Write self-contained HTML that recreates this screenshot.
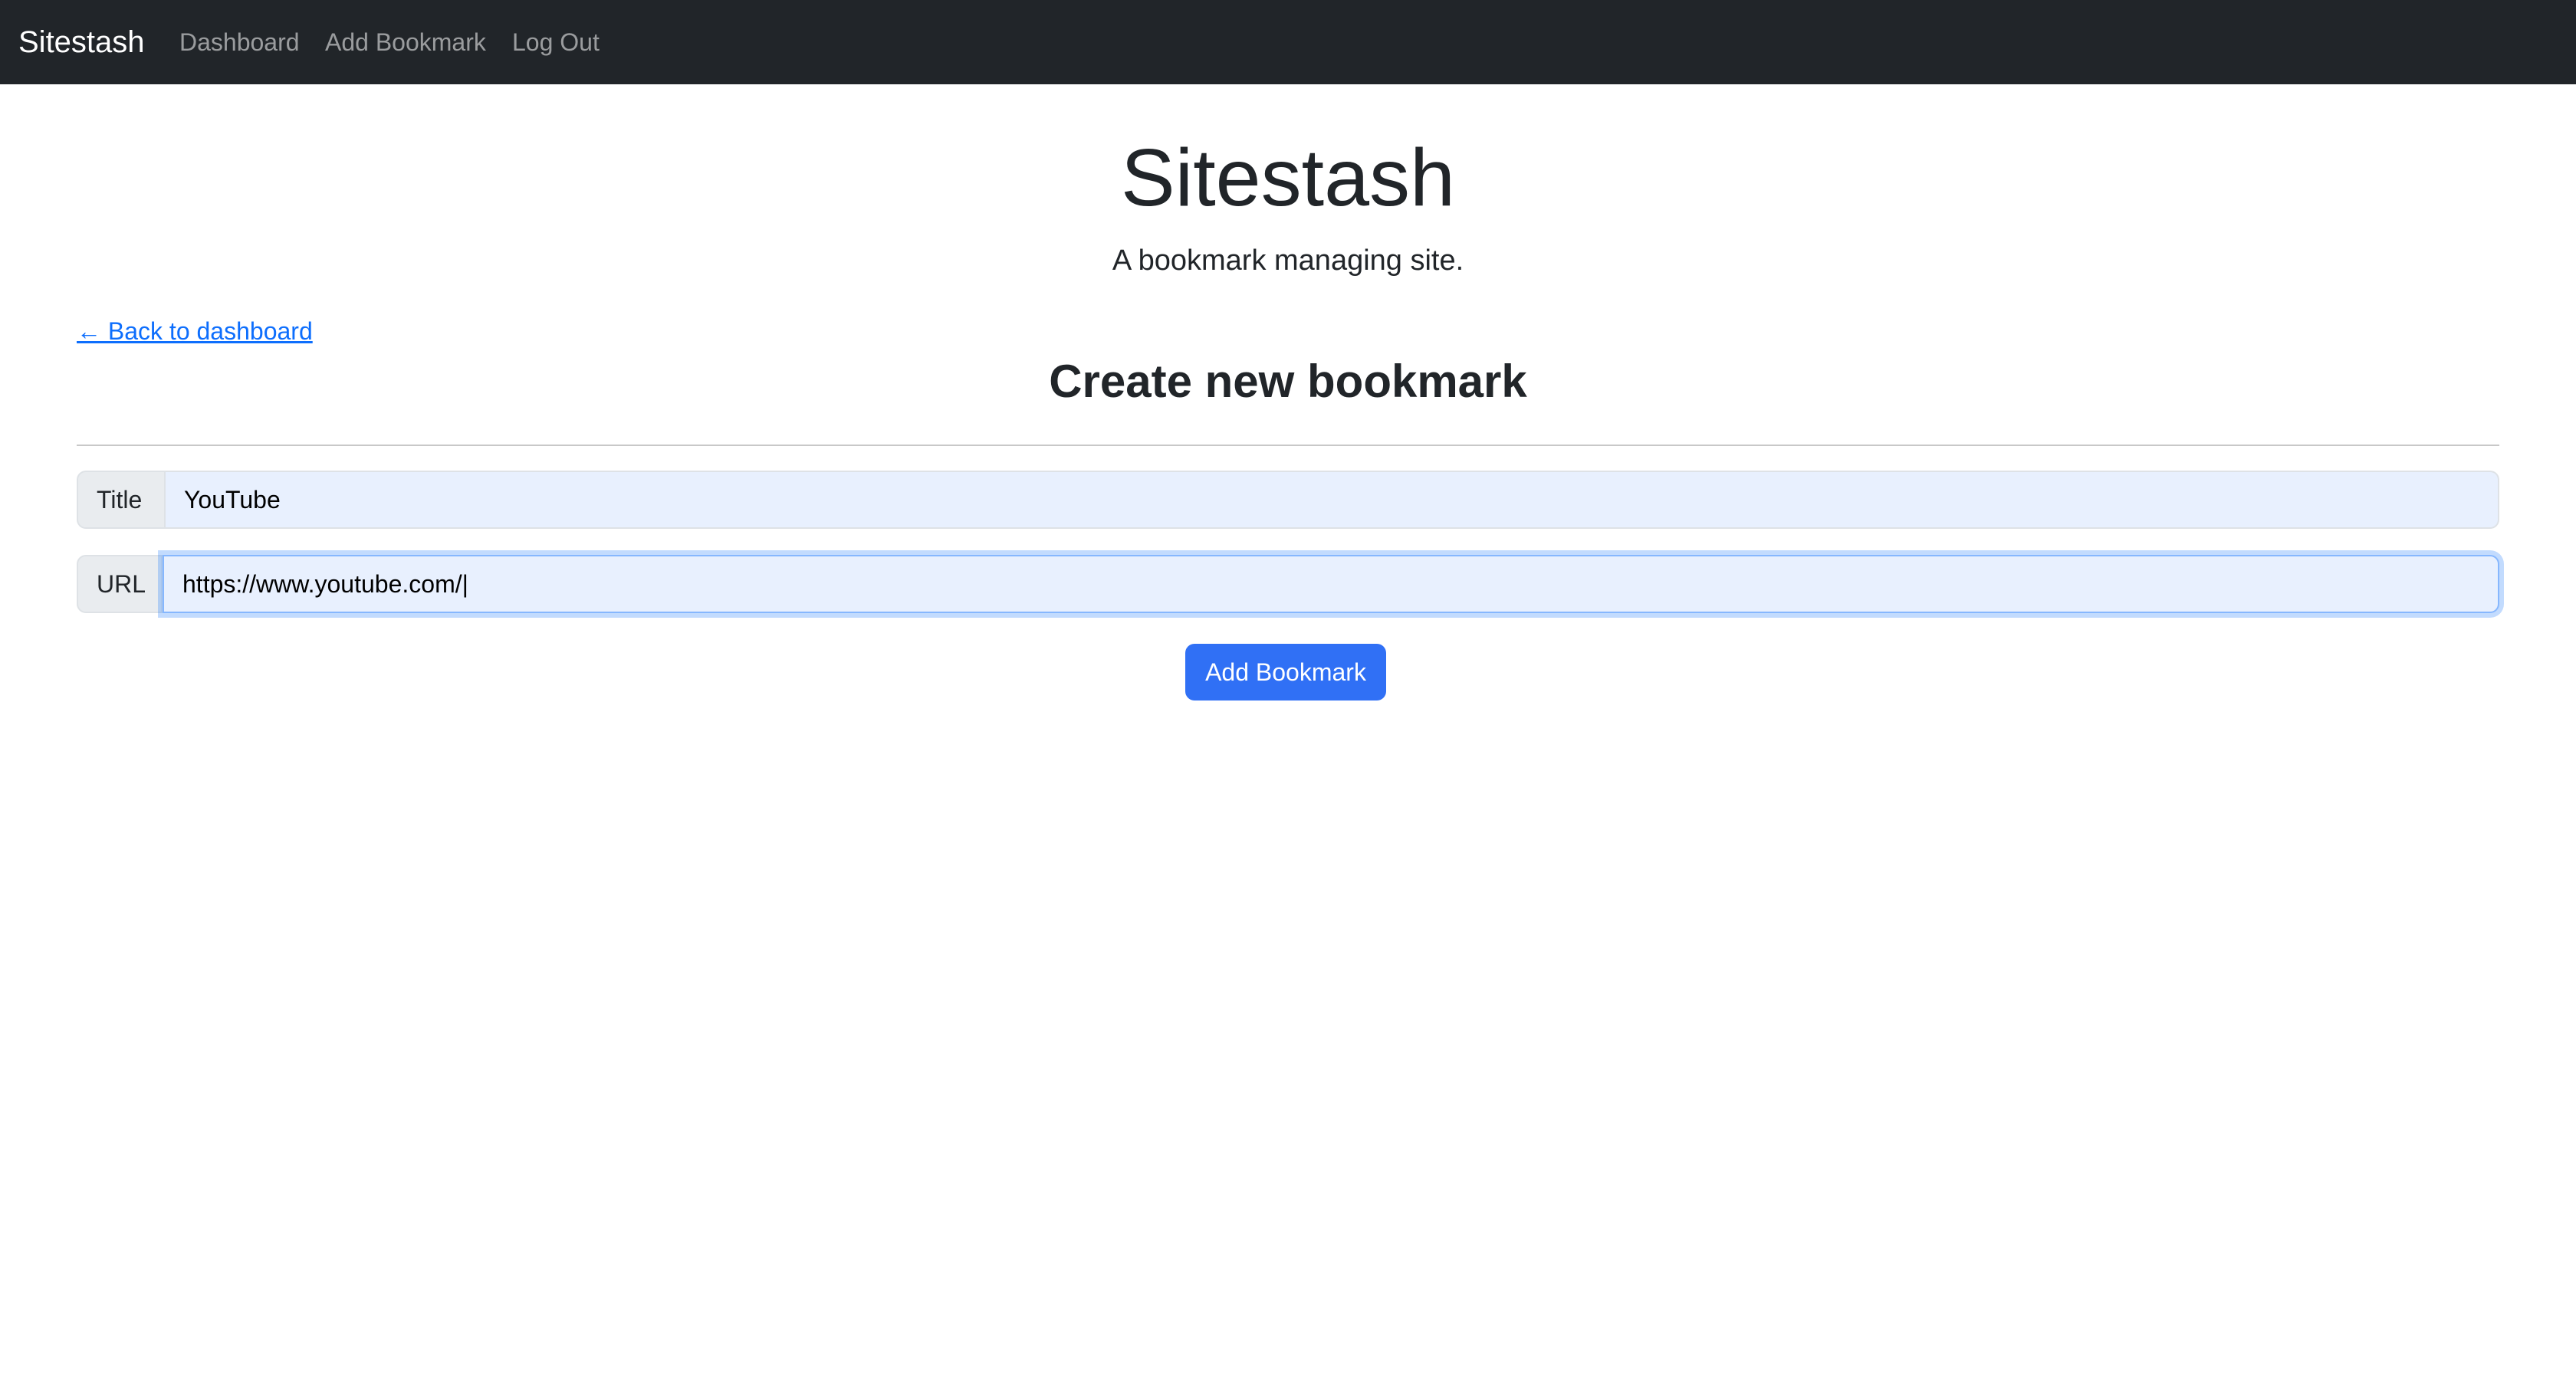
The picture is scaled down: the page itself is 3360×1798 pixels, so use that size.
<!DOCTYPE html>
<html><head><meta charset="utf-8"><style>
html,body{margin:0;padding:0;background:#fff}
body{zoom:2;width:1680px;height:899px;position:relative;overflow:hidden;font-family:"Liberation Sans",Arial,sans-serif;color:#212529}
.nav{position:absolute;left:0;top:0;width:1680px;height:55px;background:#212529}
.nav span{position:absolute;top:0;line-height:55px;font-size:16px;color:rgba(255,255,255,.55)}
.nav .brand{font-size:20px;color:#fff;left:12px}
.abs{position:absolute}
h1{position:absolute;left:0;width:1680px;top:81px;margin:0;text-align:center;font-size:53px;font-weight:300;line-height:70px}
.lead{left:0;width:1680px;top:157px;text-align:center;font-size:19px;font-weight:300;line-height:26px}
.back{left:50px;top:204px;font-size:16px;line-height:24px;color:#0d6efd;text-decoration:underline}
h2{position:absolute;left:0;width:1680px;top:229px;margin:0;text-align:center;font-size:30px;font-weight:600;line-height:40px}
.hr{left:50px;width:1580px;top:290px;height:1px;background:#c8c8c8}
.grp{position:absolute;left:50px;width:1580px;height:38px;display:flex}
.lbl{height:36px;line-height:36px;padding:0 12px;background:#e9ecef;border:1px solid #dee2e6;border-radius:6px 0 0 6px;font-size:16px}
.inp{flex:1;height:36px;line-height:36px;padding:0 12px;background:#e8f0fe;border:1px solid #dee2e6;border-left:none;border-radius:0 6px 6px 0;font-size:16px;color:#000}
.focus{border:1px solid #86b7fe;box-shadow:0 0 0 3px rgba(13,110,253,.25);position:relative;z-index:1}
.btn{left:773px;top:420px;width:131px;height:37px;line-height:37px;text-align:center;background:#3070f5;color:#fff;border-radius:6px;font-size:16px}
</style></head><body>
<div class="nav"><span class="brand">Sitestash</span><span style="left:117px">Dashboard</span><span style="left:212px">Add Bookmark</span><span style="left:334px">Log Out</span></div>
<h1>Sitestash</h1>
<div class="abs lead">A bookmark managing site.</div>
<div class="abs back">← Back to dashboard</div>
<h2>Create new bookmark</h2>
<div class="abs hr"></div>
<div class="grp" style="top:307px"><div class="lbl" style="width:32px">Title</div><div class="inp">YouTube</div></div>
<div class="grp" style="top:362px"><div class="lbl" style="width:30px">URL</div><div class="inp focus">https://www.youtube.com/|</div></div>
<div class="abs btn">Add Bookmark</div>
</body></html>
